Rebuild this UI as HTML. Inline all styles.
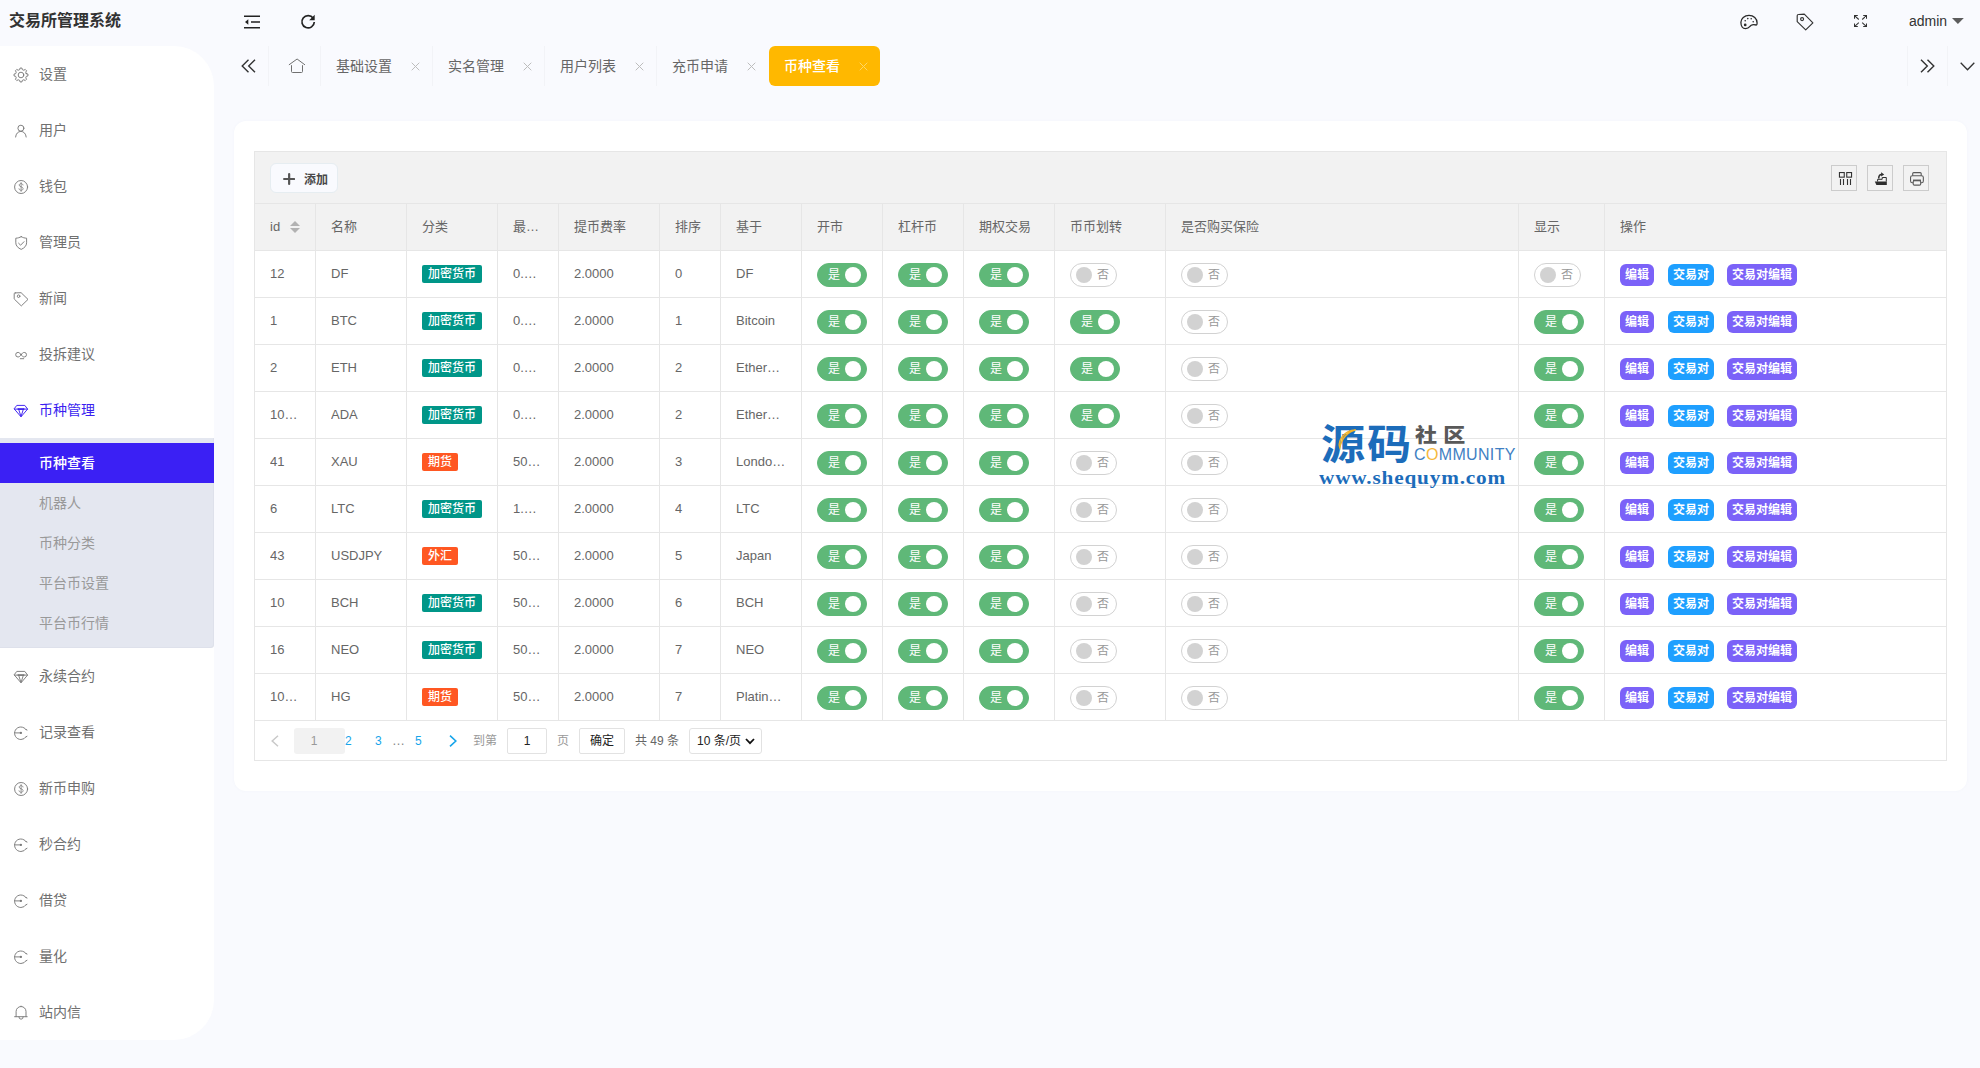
<!DOCTYPE html><html lang="zh-CN"><head><meta charset="utf-8"><title>交易所管理系统</title><style>
*{box-sizing:border-box;margin:0;padding:0}
html,body{width:1980px;height:1068px;overflow:hidden}
body{background:#f9fafe;font-family:"Liberation Sans","Noto Sans CJK SC",sans-serif;font-size:14px;color:#666;position:relative}
.abs{position:absolute}
svg{display:block}
/* logo */
#logo{left:9px;top:0;height:42px;line-height:41px;font-size:16px;font-weight:700;color:#333}
/* sidebar */
#side{left:0;top:46px;width:214px;height:994px;background:#fff;border-radius:0 40px 40px 0;overflow:hidden}
.mi{position:relative;height:56px;line-height:56px;padding-left:39px;color:#707070;font-size:14px;white-space:nowrap}
.mi svg{position:absolute;left:13px;top:20.700px;width:16px;height:16px;color:#7a7a7a}
.mi.on svg{color:#3b1ff0}
.mi.on{color:#3b1ff0}
.sub{background:#e4e7f0;padding:5px 0;height:210px;border-radius:0 0 3px 0;box-shadow:inset -1px -1px 0 rgba(0,0,40,.025)}
.sub div{height:40px;line-height:40px;padding-left:39px;color:#999;font-size:14px}
.sub div.on{background:#3b20f4;color:#fff;font-weight:500}
/* header */
.hic{position:absolute}
#admin{left:1909px;top:0;height:42px;line-height:42px;font-size:14px;color:#333}
/* tabs */
.tab{position:absolute;top:46px;height:40px;line-height:40px;font-size:14px;color:#666;white-space:nowrap}
.dv{position:absolute;top:46px;width:1px;height:40px;background:#f2f3f7}
.tab .x{position:absolute;top:0;font-size:0}
.tab.on{background:#ffb800;color:#fff;border-radius:6px}
/* card */
#card{left:234px;top:121px;width:1733px;height:670px;background:#fff;border-radius:12px;box-shadow:0 0 3px rgba(120,130,180,.05)}
#tv{left:20px;top:30px;width:1693px;height:610px;border:1px solid #e6e6e6;position:absolute}
#tool{height:52px;background:#f2f2f2;border-bottom:1px solid #e6e6e6;position:relative}
#add{position:absolute;left:15px;top:11px;width:68px;height:30px;background:#f9fafe;border-radius:6px;font-size:12px;font-weight:700;color:#484848;line-height:32px;padding-left:33px;border:1px solid #e6edf1}
.tb{position:absolute;top:13px;width:26px;height:26px;border:1px solid #ccc}
table{border-collapse:separate;border-spacing:0;table-layout:fixed;width:1691px}
th,td{height:47px;border:1px solid #e6e6e6;border-left:0;border-top:0;padding:0 15px;text-align:left;font-weight:400;font-size:13px;color:#666;white-space:nowrap;overflow:hidden;vertical-align:middle;position:relative}
th{background:#f2f2f2}
th:last-child,td:last-child{border-right:0}
.c{display:block;height:28px;line-height:28px;overflow:hidden;text-overflow:ellipsis;white-space:nowrap}
.bd{display:inline-block;height:18px;line-height:18px;padding:0 6px;font-size:12px;font-weight:500;color:#fff;border-radius:2px;vertical-align:middle;position:relative;top:-1px}
.g{background:#009688}.o{background:#ff5722}
.sw{display:inline-block;position:relative;height:24px;border-radius:12px;vertical-align:middle;font-size:12px;line-height:23px;top:0}
.sw.y{width:50px;background:#5fb878;border:1px solid #5fb878;color:#fff;padding-left:10px}
.sw.n{width:47px;background:#fff;border:1px solid #d2d2d2;color:#999;padding-left:26px}
.sw i{position:absolute;top:3px;width:16px;height:16px;border-radius:50%}
.sw.y i{right:5px;background:#fff}
.sw.n i{left:5px;background:#d2d2d2}
.bt{display:inline-block;height:22px;line-height:22px;padding:0 5px;font-size:12px;font-weight:700;color:#fff;border-radius:6px;vertical-align:middle;position:relative;top:0}
.p{background:#7b62f8}.b{background:#1e9fff}
#pg{position:relative;height:39px;font-size:12px;color:#666}
#pg span,#pg div{position:absolute;white-space:nowrap}
</style></head><body><div id="logo" class="abs">交易所管理系统</div><svg class="hic" style="left:244px;top:15px;width:16px;height:14px;color:#222" viewBox="0 0 16 14" fill="none" stroke="currentColor" stroke-width="1.6"><path d="M0 1.200h16M7 7h9M0 12.800h16"/><path d="M4.300 4.200L1 7l3.300 2.800z" fill="currentColor" stroke="none"/></svg><svg class="hic" style="left:300px;top:14px;width:16px;height:16px;color:#222" viewBox="0 0 16 16" fill="none" stroke="currentColor" stroke-width="1.700"><path d="M13.200 4.200A6.200 6.200 0 1014.300 8"/><path d="M14.700 .7v5.500H9.200z" fill="currentColor" stroke="none"/></svg><svg class="hic" style="left:1740px;top:14px;width:18px;height:16px;color:#2a2a2a" viewBox="0 0 18 16" fill="none" stroke="currentColor" stroke-width="1.300"><path d="M9 1.400C13.600 1.400 17.100 4.600 17.100 9c0 1.300-.2 2-.8 2-1.500-.4-3.700-.6-5.100.2-1.600 1-1.700 3.500-5.700 3.500C2.600 14.700.9 12 .9 8.300.9 4.500 4.400 1.400 9 1.400z"/><g fill="currentColor" stroke="none"><circle cx="5.200" cy="10.900" r="1.350"/><circle cx="5.200" cy="6.800" r=".8"/><circle cx="7.800" cy="4.600" r=".8"/><circle cx="11.200" cy="4.800" r=".8"/><circle cx="13.200" cy="7.700" r=".8"/></g></svg><svg class="hic" style="left:1796px;top:13px;width:18px;height:18px;color:#333" viewBox="0 0 18 18" fill="none" stroke="currentColor" stroke-width="1.150" stroke-linejoin="round"><path d="M2.400 1.500L8.300 1.100l8.600 8.700-7.200 7L1.200 8.600V2.700Q1.200 1.500 2.400 1.500z"/><circle cx="6.100" cy="6.050" r="1.500"/></svg><svg class="hic" style="left:1854.200px;top:15.300px;width:13px;height:12.200px;color:#333" viewBox="0 0 13 12" fill="none" stroke="currentColor" stroke-width="1.050"><path d="M.5 3.600V.5h3.300M9.200 .5h3.300v3.100M12.500 8.400v3.100H9.200M3.800 11.500H.5V8.400M.5 .5l4.300 3.900M12.500 .5L8.200 4.400M12.500 11.500L8.200 7.600M.5 11.500l4.300-3.900"/></svg><div id="admin" class="abs">admin<svg style="position:absolute;left:43.200px;top:18.100px;width:11.800px;height:6px" viewBox="0 0 12 6"><path d="M0 0h12L6 6z" fill="#5c5c5c"/></svg></div><div id="side" class="abs"><div class="mi"><svg viewBox="0 0 16 16" fill="none" stroke="currentColor" stroke-width=".95" stroke-linejoin="round" stroke-linecap="round" ><path d="M13.34 6.67L14.93 7.03L14.93 8.97L13.34 9.33A5.5 5.5 0 0 1 12.71 10.83L13.59 12.21L12.21 13.59L10.83 12.71A5.5 5.5 0 0 1 9.33 13.34L8.97 14.93L7.03 14.93L6.67 13.34A5.5 5.5 0 0 1 5.17 12.71L3.79 13.59L2.41 12.21L3.29 10.83A5.5 5.5 0 0 1 2.66 9.33L1.07 8.97L1.07 7.03L2.66 6.67A5.5 5.5 0 0 1 3.29 5.17L2.41 3.79L3.79 2.41L5.17 3.29A5.5 5.5 0 0 1 6.67 2.66L7.03 1.07L8.97 1.07L9.33 2.66A5.5 5.5 0 0 1 10.83 3.29L12.21 2.41L13.59 3.79L12.71 5.17A5.5 5.5 0 0 1 13.34 6.67z"/><circle cx="8" cy="8" r="2.800"/></svg>设置</div><div class="mi"><svg viewBox="0 0 16 16" fill="none" stroke="currentColor" stroke-width=".95" stroke-linejoin="round" stroke-linecap="round" ><circle cx="7.900" cy="5.200" r="3"/><path d="M2.600 14c.3-3.400 2.500-5.600 5.300-5.600s5 2.200 5.300 5.600"/></svg>用户</div><div class="mi"><svg viewBox="0 0 16 16" fill="none" stroke="currentColor" stroke-width=".95" stroke-linejoin="round" stroke-linecap="round" ><circle cx="8.100" cy="8" r="6.500"/><path d="M10 6c-.2-.9-.9-1.400-1.900-1.400-1.100 0-1.900.6-1.900 1.500 0 2.100 3.900 1.300 3.900 3.500 0 1-.8 1.700-2 1.700-1.100 0-1.900-.6-2.100-1.500M8.100 3.600v8.800" stroke-width=".8"/></svg>钱包</div><div class="mi"><svg viewBox="0 0 16 16" fill="none" stroke="currentColor" stroke-width=".95" stroke-linejoin="round" stroke-linecap="round" ><path d="M8.200 1.700c1.600.9 3.400 1.400 5.400 1.500v4.600c0 3-2.200 5.200-5.400 6.600-3.200-1.400-5.400-3.600-5.400-6.600V3.200c2-.1 3.800-.6 5.400-1.500z"/><path d="M5.600 8.200l2 2 3.400-3.500"/></svg>管理员</div><div class="mi"><svg viewBox="0 0 16 16" fill="none" stroke="currentColor" stroke-width=".95" stroke-linejoin="round" stroke-linecap="round" ><path d="M2.200 1.900l5.900-.2 6.900 6.700-6.700 6.500-6.900-6.700c-.1-.1-.2-.3-.2-.5V2.900c0-.6.400-1 1-1z"/><circle cx="5.600" cy="5.200" r="1.300"/></svg>新闻</div><div class="mi"><svg viewBox="0 0 16 16" fill="none" stroke="currentColor" stroke-width=".95" stroke-linejoin="round" stroke-linecap="round" ><path d="M8.100 7.700c-.9-1.400-1.900-2.300-3.100-2.300a2.300 2.300 0 000 4.600c1.200 0 2.200-.9 3.100-2.300zm0 0c.9 1.400 1.900 2.300 3.100 2.300a2.300 2.300 0 000-4.600c-1.200 0-2.200.9-3.100 2.300zM7.300 11.700h3.400"/></svg>投拆建议</div><div class="mi on"><svg viewBox="0 0 16 16" fill="none" stroke="currentColor" stroke-width=".95" stroke-linejoin="round" stroke-linecap="round" ><path d="M4.200 2.400h7.600L14.600 6.100 8 13.800 1.400 6.100z"/><path d="M1.400 6.100H14.600M5.600 6.100L8 13.600l2.400-7.500"/><path d="M4.600 6.100h6.800" stroke-width="1.600" stroke-linecap="butt"/></svg>币种管理</div><div class="sub"><div class=on>币种查看</div><div>机器人</div><div>币种分类</div><div>平台币设置</div><div>平台币行情</div></div><div class="mi"><svg viewBox="0 0 16 16" fill="none" stroke="currentColor" stroke-width=".95" stroke-linejoin="round" stroke-linecap="round" ><path d="M4.200 2.400h7.600L14.600 6.100 8 13.800 1.400 6.100z"/><path d="M1.400 6.100H14.600M5.600 6.100L8 13.600l2.400-7.500"/><path d="M4.600 6.100h6.800" stroke-width="1.600" stroke-linecap="butt"/></svg>永续合约</div><div class="mi"><svg viewBox="0 0 16 16" fill="none" stroke="currentColor" stroke-width=".95" stroke-linejoin="round" stroke-linecap="round" ><path d="M13.200 4.800A6.300 6.300 0 107.900 14.500a6.300 6.300 0 005.300-2.900"/><path d="M1.600 7.900h6.300M13 4.500l1 .5M13 11.900l1-.6"/><circle cx="7.900" cy="7.900" r="1.150" fill="currentColor" stroke="none"/></svg>记录查看</div><div class="mi"><svg viewBox="0 0 16 16" fill="none" stroke="currentColor" stroke-width=".95" stroke-linejoin="round" stroke-linecap="round" ><circle cx="8.100" cy="8" r="6.500"/><path d="M10 6c-.2-.9-.9-1.400-1.900-1.400-1.100 0-1.900.6-1.900 1.500 0 2.100 3.900 1.300 3.900 3.500 0 1-.8 1.700-2 1.700-1.100 0-1.900-.6-2.100-1.500M8.100 3.600v8.800" stroke-width=".8"/></svg>新币申购</div><div class="mi"><svg viewBox="0 0 16 16" fill="none" stroke="currentColor" stroke-width=".95" stroke-linejoin="round" stroke-linecap="round" ><path d="M13.200 4.800A6.300 6.300 0 107.900 14.500a6.300 6.300 0 005.300-2.900"/><path d="M1.600 7.900h6.300M13 4.500l1 .5M13 11.900l1-.6"/><circle cx="7.900" cy="7.900" r="1.150" fill="currentColor" stroke="none"/></svg>秒合约</div><div class="mi"><svg viewBox="0 0 16 16" fill="none" stroke="currentColor" stroke-width=".95" stroke-linejoin="round" stroke-linecap="round" ><path d="M13.200 4.800A6.300 6.300 0 107.900 14.500a6.300 6.300 0 005.300-2.900"/><path d="M1.600 7.900h6.300M13 4.500l1 .5M13 11.900l1-.6"/><circle cx="7.900" cy="7.900" r="1.150" fill="currentColor" stroke="none"/></svg>借贷</div><div class="mi"><svg viewBox="0 0 16 16" fill="none" stroke="currentColor" stroke-width=".95" stroke-linejoin="round" stroke-linecap="round" ><path d="M13.200 4.800A6.300 6.300 0 107.900 14.500a6.300 6.300 0 005.300-2.900"/><path d="M1.600 7.900h6.300M13 4.500l1 .5M13 11.900l1-.6"/><circle cx="7.900" cy="7.900" r="1.150" fill="currentColor" stroke="none"/></svg>量化</div><div class="mi"><svg viewBox="0 0 16 16" fill="none" stroke="currentColor" stroke-width=".95" stroke-linejoin="round" stroke-linecap="round" ><path d="M3.100 11.700V6.500a4.950 4.950 0 019.900 0v5.200M1.600 11.700h12.600M5.900 11.900a2.150 2.300 0 004.300 0M8.050 1.500v-.4"/></svg>站内信</div></div><svg class="hic" style="left:241px;top:59px;width:15px;height:14px;color:#333" viewBox="0 0 15 14" fill="none" stroke="currentColor" stroke-width="1.400"><path d="M7.500 .7L1.200 7l6.300 6.300M14 .7L7.700 7l6.300 6.300"/></svg><svg class="hic" style="left:288px;top:58px;width:18px;height:16px;color:#707070" viewBox="0 0 18 16" fill="none" stroke="currentColor" stroke-width="1"><path d="M.9 6.900L9.100 1l7.900 5.900M3.500 7.200v6.300q0 1 1 1h9q1 0 1-1V7.200"/></svg><div class="tab" style="left:320px;width:112px;padding-left:16px">基础设置<svg class="x" style="left:91px;top:15.500px;width:9px;height:9px" viewBox="0 0 9 9" stroke="#bdbdbd" stroke-width="1" fill="none"><path d="M.7 .7l7.600 7.600M8.300 .7L.7 8.300"/></svg></div><div class="tab" style="left:432px;width:112px;padding-left:16px">实名管理<svg class="x" style="left:91px;top:15.500px;width:9px;height:9px" viewBox="0 0 9 9" stroke="#bdbdbd" stroke-width="1" fill="none"><path d="M.7 .7l7.600 7.600M8.300 .7L.7 8.300"/></svg></div><div class="tab" style="left:544px;width:112px;padding-left:16px">用户列表<svg class="x" style="left:91px;top:15.500px;width:9px;height:9px" viewBox="0 0 9 9" stroke="#bdbdbd" stroke-width="1" fill="none"><path d="M.7 .7l7.600 7.600M8.300 .7L.7 8.300"/></svg></div><div class="tab" style="left:656px;width:112px;padding-left:16px">充币申请<svg class="x" style="left:91px;top:15.500px;width:9px;height:9px" viewBox="0 0 9 9" stroke="#bdbdbd" stroke-width="1" fill="none"><path d="M.7 .7l7.600 7.600M8.300 .7L.7 8.300"/></svg></div><div class="tab on" style="left:769px;width:111px;padding-left:15px;font-weight:500">币种查看<svg class="x" style="left:90px;top:15.500px;width:9px;height:9px" viewBox="0 0 9 9" stroke="#ffd666" stroke-width="1" fill="none"><path d="M.7 .7l7.600 7.600M8.300 .7L.7 8.300"/></svg></div><div class="dv" style="left:268px"></div><div class="dv" style="left:320px"></div><div class="dv" style="left:432px"></div><div class="dv" style="left:544px"></div><div class="dv" style="left:656px"></div><div class="dv" style="left:1907px"></div><div class="dv" style="left:1947px"></div><svg class="hic" style="left:1920px;top:59px;width:15px;height:14px;color:#333" viewBox="0 0 15 14" fill="none" stroke="currentColor" stroke-width="1.400"><path d="M1 .7L7.300 7 1 13.300M7.500 .7L13.800 7l-6.300 6.300"/></svg><svg class="hic" style="left:1960px;top:62px;width:15px;height:9px;color:#333" viewBox="0 0 15 9" fill="none" stroke="currentColor" stroke-width="1.300"><path d="M.7 .7L7.500 7.800 14.300 .7"/></svg><div id="card" class="abs"><div id="tv"><div id="tool"><div id="add"><svg style="position:absolute;left:12px;top:9.200px;width:12.300px;height:12px" viewBox="0 0 12.300 12" stroke="#555" stroke-width="2.200" stroke-linecap="round" fill="none"><path d="M6.150 1.100v9.800M1.100 6h10.100"/></svg>添加</div><div class="tb" style="left:1576px"><svg width="24" height="24" viewBox="0 0 24 24" fill="none" stroke="#333" stroke-width="1.100"><rect x="7.450" y="6.550" width="4.800" height="4.600"/><rect x="14.750" y="6.550" width="4.800" height="4.600"/><path d="M8.500 13.100V19M11.500 13.100V19M15.500 13.100V19M18.500 13.100V19"/></svg></div><div class="tb" style="left:1612px"><svg width="24" height="24" viewBox="0 0 24 24" fill="none" stroke="#2e2e2e" stroke-width="1"><path d="M6.800 15.500H18.800V19.100H8.400z" fill="#2e2e2e" stroke="none"/><path d="M9.600 15.500V13.300H14.200V11.500H18.300V15.500"/><path d="M10.700 12.600C10.700 9.800 12 8.400 13.600 8.400" stroke-width="1.500"/><path d="M13.100 6.200L16.200 8.400 13.100 10.600z" fill="#2e2e2e" stroke="none"/></svg></div><div class="tb" style="left:1648px"><svg width="24" height="24" viewBox="0 0 24 24" fill="none" stroke="#5a5a5a" stroke-width="1.100"><path d="M8.700 9.800V7.600c0-.6.400-1 1-1h6.500c.6 0 1 .4 1 1v2.200"/><rect x="6.550" y="9.800" width="12.800" height="7" rx="1.800"/><rect x="9.200" y="14.600" width="7.500" height="4.500" rx="1.200" fill="#f2f2f2"/><path d="M9 14.300h8" stroke-width="1.500"/></svg></div></div><table><colgroup><col style="width:61px"><col style="width:91px"><col style="width:91px"><col style="width:61px"><col style="width:101px"><col style="width:61px"><col style="width:81px"><col style="width:81px"><col style="width:81px"><col style="width:91px"><col style="width:111px"><col style="width:353px"><col style="width:86px"><col style="width:341px"></colgroup><tr><th><span class="c">id</span><svg style="position:absolute;left:35px;top:17px;width:10px;height:12px" viewBox="0 0 10 12"><path d="M0 5L5 0l5 5z" fill="#b2b2b2"/><path d="M0 7L5 12l5-5z" fill="#b2b2b2"/></svg></th><th><span class="c">名称</span></th><th><span class="c">分类</span></th><th><span class="c">最小提币数量</span></th><th><span class="c">提币费率</span></th><th><span class="c">排序</span></th><th><span class="c">基于</span></th><th><span class="c">开市</span></th><th><span class="c">杠杆币</span></th><th><span class="c">期权交易</span></th><th><span class="c">币币划转</span></th><th><span class="c">是否购买保险</span></th><th><span class="c">显示</span></th><th><span class="c">操作</span></th></tr><tr><td><span class="c">12</span></td><td><span class="c">DF</span></td><td><span class="c"><span class="bd g">加密货币</span></span></td><td><span class="c">0.0000</span></td><td><span class="c">2.0000</span></td><td><span class="c">0</span></td><td><span class="c">DF</span></td><td><span class="c"><span class="sw y">是<i></i></span></span></td><td><span class="c"><span class="sw y">是<i></i></span></span></td><td><span class="c"><span class="sw y">是<i></i></span></span></td><td><span class="c"><span class="sw n"><i></i>否</span></span></td><td><span class="c"><span class="sw n"><i></i>否</span></span></td><td><span class="c"><span class="sw n"><i></i>否</span></span></td><td><span class="c"><span class="bt p">编辑</span><span class="bt b" style="margin-left:14px">交易对</span><span class="bt p" style="margin-left:13px">交易对编辑</span></span></td></tr><tr><td><span class="c">1</span></td><td><span class="c">BTC</span></td><td><span class="c"><span class="bd g">加密货币</span></span></td><td><span class="c">0.0000</span></td><td><span class="c">2.0000</span></td><td><span class="c">1</span></td><td><span class="c">Bitcoin</span></td><td><span class="c"><span class="sw y">是<i></i></span></span></td><td><span class="c"><span class="sw y">是<i></i></span></span></td><td><span class="c"><span class="sw y">是<i></i></span></span></td><td><span class="c"><span class="sw y">是<i></i></span></span></td><td><span class="c"><span class="sw n"><i></i>否</span></span></td><td><span class="c"><span class="sw y">是<i></i></span></span></td><td><span class="c"><span class="bt p">编辑</span><span class="bt b" style="margin-left:14px">交易对</span><span class="bt p" style="margin-left:13px">交易对编辑</span></span></td></tr><tr><td><span class="c">2</span></td><td><span class="c">ETH</span></td><td><span class="c"><span class="bd g">加密货币</span></span></td><td><span class="c">0.0000</span></td><td><span class="c">2.0000</span></td><td><span class="c">2</span></td><td><span class="c">Ethereum</span></td><td><span class="c"><span class="sw y">是<i></i></span></span></td><td><span class="c"><span class="sw y">是<i></i></span></span></td><td><span class="c"><span class="sw y">是<i></i></span></span></td><td><span class="c"><span class="sw y">是<i></i></span></span></td><td><span class="c"><span class="sw n"><i></i>否</span></span></td><td><span class="c"><span class="sw y">是<i></i></span></span></td><td><span class="c"><span class="bt p">编辑</span><span class="bt b" style="margin-left:14px">交易对</span><span class="bt p" style="margin-left:13px">交易对编辑</span></span></td></tr><tr><td><span class="c">10031</span></td><td><span class="c">ADA</span></td><td><span class="c"><span class="bd g">加密货币</span></span></td><td><span class="c">0.0000</span></td><td><span class="c">2.0000</span></td><td><span class="c">2</span></td><td><span class="c">Ethereum</span></td><td><span class="c"><span class="sw y">是<i></i></span></span></td><td><span class="c"><span class="sw y">是<i></i></span></span></td><td><span class="c"><span class="sw y">是<i></i></span></span></td><td><span class="c"><span class="sw y">是<i></i></span></span></td><td><span class="c"><span class="sw n"><i></i>否</span></span></td><td><span class="c"><span class="sw y">是<i></i></span></span></td><td><span class="c"><span class="bt p">编辑</span><span class="bt b" style="margin-left:14px">交易对</span><span class="bt p" style="margin-left:13px">交易对编辑</span></span></td></tr><tr><td><span class="c">41</span></td><td><span class="c">XAU</span></td><td><span class="c"><span class="bd o">期货</span></span></td><td><span class="c">50.0000</span></td><td><span class="c">2.0000</span></td><td><span class="c">3</span></td><td><span class="c">London Gold</span></td><td><span class="c"><span class="sw y">是<i></i></span></span></td><td><span class="c"><span class="sw y">是<i></i></span></span></td><td><span class="c"><span class="sw y">是<i></i></span></span></td><td><span class="c"><span class="sw n"><i></i>否</span></span></td><td><span class="c"><span class="sw n"><i></i>否</span></span></td><td><span class="c"><span class="sw y">是<i></i></span></span></td><td><span class="c"><span class="bt p">编辑</span><span class="bt b" style="margin-left:14px">交易对</span><span class="bt p" style="margin-left:13px">交易对编辑</span></span></td></tr><tr><td><span class="c">6</span></td><td><span class="c">LTC</span></td><td><span class="c"><span class="bd g">加密货币</span></span></td><td><span class="c">1.0000</span></td><td><span class="c">2.0000</span></td><td><span class="c">4</span></td><td><span class="c">LTC</span></td><td><span class="c"><span class="sw y">是<i></i></span></span></td><td><span class="c"><span class="sw y">是<i></i></span></span></td><td><span class="c"><span class="sw y">是<i></i></span></span></td><td><span class="c"><span class="sw n"><i></i>否</span></span></td><td><span class="c"><span class="sw n"><i></i>否</span></span></td><td><span class="c"><span class="sw y">是<i></i></span></span></td><td><span class="c"><span class="bt p">编辑</span><span class="bt b" style="margin-left:14px">交易对</span><span class="bt p" style="margin-left:13px">交易对编辑</span></span></td></tr><tr><td><span class="c">43</span></td><td><span class="c">USDJPY</span></td><td><span class="c"><span class="bd o">外汇</span></span></td><td><span class="c">50.0000</span></td><td><span class="c">2.0000</span></td><td><span class="c">5</span></td><td><span class="c">Japan</span></td><td><span class="c"><span class="sw y">是<i></i></span></span></td><td><span class="c"><span class="sw y">是<i></i></span></span></td><td><span class="c"><span class="sw y">是<i></i></span></span></td><td><span class="c"><span class="sw n"><i></i>否</span></span></td><td><span class="c"><span class="sw n"><i></i>否</span></span></td><td><span class="c"><span class="sw y">是<i></i></span></span></td><td><span class="c"><span class="bt p">编辑</span><span class="bt b" style="margin-left:14px">交易对</span><span class="bt p" style="margin-left:13px">交易对编辑</span></span></td></tr><tr><td><span class="c">10</span></td><td><span class="c">BCH</span></td><td><span class="c"><span class="bd g">加密货币</span></span></td><td><span class="c">50.0000</span></td><td><span class="c">2.0000</span></td><td><span class="c">6</span></td><td><span class="c">BCH</span></td><td><span class="c"><span class="sw y">是<i></i></span></span></td><td><span class="c"><span class="sw y">是<i></i></span></span></td><td><span class="c"><span class="sw y">是<i></i></span></span></td><td><span class="c"><span class="sw n"><i></i>否</span></span></td><td><span class="c"><span class="sw n"><i></i>否</span></span></td><td><span class="c"><span class="sw y">是<i></i></span></span></td><td><span class="c"><span class="bt p">编辑</span><span class="bt b" style="margin-left:14px">交易对</span><span class="bt p" style="margin-left:13px">交易对编辑</span></span></td></tr><tr><td><span class="c">16</span></td><td><span class="c">NEO</span></td><td><span class="c"><span class="bd g">加密货币</span></span></td><td><span class="c">50.0000</span></td><td><span class="c">2.0000</span></td><td><span class="c">7</span></td><td><span class="c">NEO</span></td><td><span class="c"><span class="sw y">是<i></i></span></span></td><td><span class="c"><span class="sw y">是<i></i></span></span></td><td><span class="c"><span class="sw y">是<i></i></span></span></td><td><span class="c"><span class="sw n"><i></i>否</span></span></td><td><span class="c"><span class="sw n"><i></i>否</span></span></td><td><span class="c"><span class="sw y">是<i></i></span></span></td><td><span class="c"><span class="bt p">编辑</span><span class="bt b" style="margin-left:14px">交易对</span><span class="bt p" style="margin-left:13px">交易对编辑</span></span></td></tr><tr><td><span class="c">10034</span></td><td><span class="c">HG</span></td><td><span class="c"><span class="bd o">期货</span></span></td><td><span class="c">50.0000</span></td><td><span class="c">2.0000</span></td><td><span class="c">7</span></td><td><span class="c">Platinum</span></td><td><span class="c"><span class="sw y">是<i></i></span></span></td><td><span class="c"><span class="sw y">是<i></i></span></span></td><td><span class="c"><span class="sw y">是<i></i></span></span></td><td><span class="c"><span class="sw n"><i></i>否</span></span></td><td><span class="c"><span class="sw n"><i></i>否</span></span></td><td><span class="c"><span class="sw y">是<i></i></span></span></td><td><span class="c"><span class="bt p">编辑</span><span class="bt b" style="margin-left:14px">交易对</span><span class="bt p" style="margin-left:13px">交易对编辑</span></span></td></tr></table><div id="pg"><svg class="abs" style="left:16px;top:14px;width:8px;height:12px" viewBox="0 0 8 12" fill="none" stroke="#c9c9c9" stroke-width="1.500"><path d="M7 .7L1.200 6 7 11.300"/></svg><div style="left:39px;top:7px;width:51px;height:26px;background:#f2f2f2;border-radius:3px;text-align:center;line-height:26px;color:#999;padding-right:11px">1</div><span style="left:90px;top:0;line-height:40px;color:#17a5ea">2</span><span style="left:120px;top:0;line-height:40px;color:#17a5ea">3</span><span style="left:160px;top:0;line-height:40px;color:#17a5ea">5</span><span style="left:137px;top:0;line-height:40px;color:#888;font-size:13px">…</span><svg class="abs" style="left:194px;top:14px;width:8px;height:12px" viewBox="0 0 8 12" fill="none" stroke="#17a5ea" stroke-width="1.600"><path d="M1 .7L6.800 6 1 11.300"/></svg><span style="left:218px;top:0;line-height:40px;color:#999">到第</span><div style="left:252px;top:7px;width:40px;height:26px;border:1px solid #e2e2e2;border-radius:2px;text-align:center;line-height:24px;color:#222;background:#fff">1</div><span style="left:302px;top:0;line-height:40px;color:#999">页</span><div style="left:324px;top:7px;width:46px;height:26px;border:1px solid #e2e2e2;border-radius:2px;text-align:center;line-height:24px;color:#222;background:#fff">确定</div><span style="left:380px;top:0;line-height:40px;color:#666">共 49 条</span><div style="left:434px;top:7px;width:73px;height:26px;border:1px solid #e2e2e2;border-radius:3px;line-height:24px;color:#222;background:#fff;padding-left:7px">10 条/页<svg style="position:absolute;left:55px;top:9px;width:10px;height:7px" viewBox="0 0 10 7" fill="none" stroke="#111" stroke-width="1.800"><path d="M1 1l4 4.200L9 1"/></svg></div></div></div></div><div class="abs" style="left:1320px;top:418px;width:200px;height:74px;pointer-events:none"><span class="abs" style="left:.5px;top:2.200px;font-size:40.500px;line-height:50px;font-weight:700;color:#1c6cba;letter-spacing:1.800px;transform:scaleX(1.09);transform-origin:0 0;white-space:nowrap">源码</span><span class="abs" style="left:95px;top:3.300px;font-size:19.500px;line-height:26px;font-weight:900;color:#595959;letter-spacing:5.500px;white-space:nowrap;transform:scaleX(1.13);transform-origin:0 0;font-family:'Noto Sans CJK SC',sans-serif">社区</span><span class="abs" style="left:94px;top:27.200px;font-size:16px;line-height:20px;color:#3f7fc3;letter-spacing:.35px;white-space:nowrap">C<span style="position:static;color:#f5b83d">O</span>MMUNITY</span><span class="abs" style="left:-1px;top:48.200px;font-size:18px;line-height:24px;font-weight:700;color:#1c6cba;font-family:'Liberation Serif',serif;letter-spacing:.7px;transform:scaleX(1.18);transform-origin:0 0;white-space:nowrap">www.shequym.com</span><svg class="abs" style="left:17px;top:9px;width:22px;height:23px" viewBox="0 0 22 24" fill="none" stroke="#f5b324" stroke-width="1.300"><path d="M2.500 22C-.5 14 7 3.500 19 3c-8 2-15 9-16.500 19z" fill="#f5b324" fill-opacity=".6"/></svg></div></body></html>
